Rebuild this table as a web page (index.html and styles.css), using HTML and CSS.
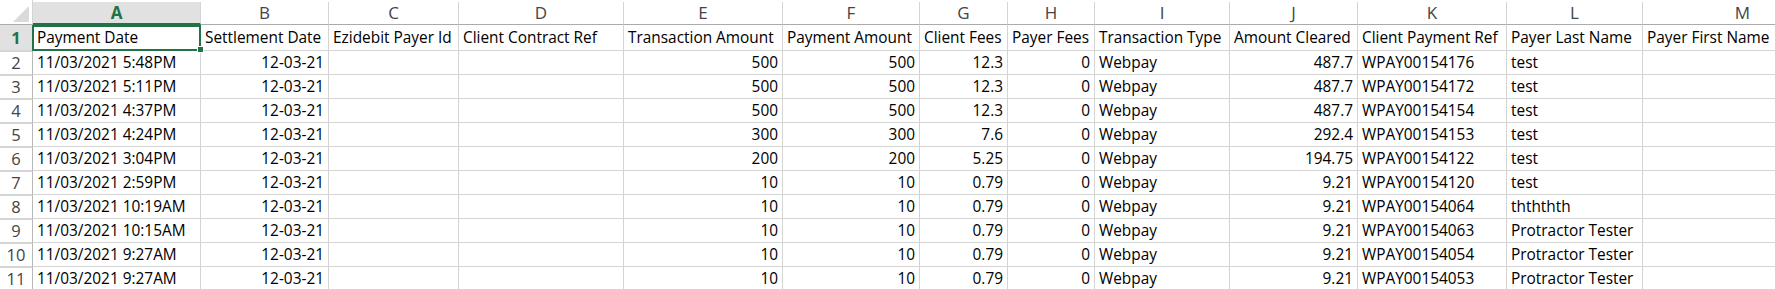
FILE: index.html
```html
<!DOCTYPE html>
<html>
<head>
<meta charset="utf-8">
<link rel="stylesheet" href="styles.css">
</head>
<body>
<div class="sheet">
  <div class="row colhead">
    <div class="corner"><svg width="16" height="16" viewBox="0 0 16 16"><polygon points="16,0 16,16 0,16" fill="#dadada"/></svg></div>
    <div class="ch sel">A</div><div class="ch">B</div><div class="ch">C</div><div class="ch">D</div><div class="ch">E</div><div class="ch">F</div><div class="ch">G</div><div class="ch">H</div><div class="ch">I</div><div class="ch">J</div><div class="ch">K</div><div class="ch">L</div><div class="ch">M</div><div class="ch"></div>
  </div>
  <div class="row first">
    <div class="rh sel">1</div>
    <div class="c active">Payment Date</div><div class="c">Settlement Date</div><div class="c">Ezidebit Payer Id</div><div class="c">Client Contract Ref</div><div class="c">Transaction Amount</div><div class="c">Payment Amount</div><div class="c">Client Fees</div><div class="c">Payer Fees</div><div class="c">Transaction Type</div><div class="c">Amount Cleared</div><div class="c">Client Payment Ref</div><div class="c">Payer Last Name</div><div class="c">Payer First Name</div><div class="c"></div>
  </div>
  <div class="row">
    <div class="rh">2</div>
    <div class="c">11/03/2021 5:48PM</div><div class="c n">12-03-21</div><div class="c"></div><div class="c"></div><div class="c n">500</div><div class="c n">500</div><div class="c n">12.3</div><div class="c n">0</div><div class="c">Webpay</div><div class="c n">487.7</div><div class="c">WPAY00154176</div><div class="c">test</div><div class="c"></div><div class="c"></div>
  </div>
  <div class="row">
    <div class="rh">3</div>
    <div class="c">11/03/2021 5:11PM</div><div class="c n">12-03-21</div><div class="c"></div><div class="c"></div><div class="c n">500</div><div class="c n">500</div><div class="c n">12.3</div><div class="c n">0</div><div class="c">Webpay</div><div class="c n">487.7</div><div class="c">WPAY00154172</div><div class="c">test</div><div class="c"></div><div class="c"></div>
  </div>
  <div class="row">
    <div class="rh">4</div>
    <div class="c">11/03/2021 4:37PM</div><div class="c n">12-03-21</div><div class="c"></div><div class="c"></div><div class="c n">500</div><div class="c n">500</div><div class="c n">12.3</div><div class="c n">0</div><div class="c">Webpay</div><div class="c n">487.7</div><div class="c">WPAY00154154</div><div class="c">test</div><div class="c"></div><div class="c"></div>
  </div>
  <div class="row">
    <div class="rh">5</div>
    <div class="c">11/03/2021 4:24PM</div><div class="c n">12-03-21</div><div class="c"></div><div class="c"></div><div class="c n">300</div><div class="c n">300</div><div class="c n">7.6</div><div class="c n">0</div><div class="c">Webpay</div><div class="c n">292.4</div><div class="c">WPAY00154153</div><div class="c">test</div><div class="c"></div><div class="c"></div>
  </div>
  <div class="row">
    <div class="rh">6</div>
    <div class="c">11/03/2021 3:04PM</div><div class="c n">12-03-21</div><div class="c"></div><div class="c"></div><div class="c n">200</div><div class="c n">200</div><div class="c n">5.25</div><div class="c n">0</div><div class="c">Webpay</div><div class="c n">194.75</div><div class="c">WPAY00154122</div><div class="c">test</div><div class="c"></div><div class="c"></div>
  </div>
  <div class="row">
    <div class="rh">7</div>
    <div class="c">11/03/2021 2:59PM</div><div class="c n">12-03-21</div><div class="c"></div><div class="c"></div><div class="c n">10</div><div class="c n">10</div><div class="c n">0.79</div><div class="c n">0</div><div class="c">Webpay</div><div class="c n">9.21</div><div class="c">WPAY00154120</div><div class="c">test</div><div class="c"></div><div class="c"></div>
  </div>
  <div class="row">
    <div class="rh">8</div>
    <div class="c">11/03/2021 10:19AM</div><div class="c n">12-03-21</div><div class="c"></div><div class="c"></div><div class="c n">10</div><div class="c n">10</div><div class="c n">0.79</div><div class="c n">0</div><div class="c">Webpay</div><div class="c n">9.21</div><div class="c">WPAY00154064</div><div class="c">thththth</div><div class="c"></div><div class="c"></div>
  </div>
  <div class="row">
    <div class="rh">9</div>
    <div class="c">11/03/2021 10:15AM</div><div class="c n">12-03-21</div><div class="c"></div><div class="c"></div><div class="c n">10</div><div class="c n">10</div><div class="c n">0.79</div><div class="c n">0</div><div class="c">Webpay</div><div class="c n">9.21</div><div class="c">WPAY00154063</div><div class="c">Protractor Tester</div><div class="c"></div><div class="c"></div>
  </div>
  <div class="row">
    <div class="rh">10</div>
    <div class="c">11/03/2021 9:27AM</div><div class="c n">12-03-21</div><div class="c"></div><div class="c"></div><div class="c n">10</div><div class="c n">10</div><div class="c n">0.79</div><div class="c n">0</div><div class="c">Webpay</div><div class="c n">9.21</div><div class="c">WPAY00154054</div><div class="c">Protractor Tester</div><div class="c"></div><div class="c"></div>
  </div>
  <div class="row">
    <div class="rh">11</div>
    <div class="c">11/03/2021 9:27AM</div><div class="c n">12-03-21</div><div class="c"></div><div class="c"></div><div class="c n">10</div><div class="c n">10</div><div class="c n">0.79</div><div class="c n">0</div><div class="c">Webpay</div><div class="c n">9.21</div><div class="c">WPAY00154053</div><div class="c">Protractor Tester</div><div class="c"></div><div class="c"></div>
  </div>
</div>
</body>
</html>
```
FILE: styles.css
```css
html, body {
  margin: 0;
  padding: 0;
  background: #ffffff;
  overflow: hidden;
}
.sheet {
  font-family: "Open Sans", "Liberation Sans", sans-serif;
  font-size: 15.4px;
  color: #000000;
  width: 1775px;
}
.row {
  display: grid;
  grid-template-columns: 33px 168px 128px 130px 165px 159px 137px 88px 87px 135px 128px 149px 136px 200px;
  height: 24px;
}
.row.first {
  height: 26px;
}
.row.colhead {
  height: 25px;
}
.c, .rh, .ch, .corner {
  box-sizing: border-box;
  white-space: nowrap;
}
.c {
  overflow: hidden;
  border-right: 1px solid #d4d4d4;
  border-bottom: 1px solid #d4d4d4;
  line-height: 23px;
  padding: 0 3px 0 4px;
}
.first .c {
  line-height: 25px;
}
.c.n {
  text-align: right;
  padding-right: 4px;
}
.rh {
  border-right: 1px solid #b8b8b8;
  border-bottom: 1px solid #d4d4d4;
  text-align: center;
  line-height: 23px;
  color: #444444;
  font-size: 16.5px;
}
.first .rh {
  line-height: 25px;
}
.rh.sel {
  background: #e1e1e1;
  color: #217346;
  font-weight: 700;
}
.corner {
  border-bottom: 1px solid #ababab;
  border-right: 1px solid #d4d4d4;
  display: flex;
  justify-content: flex-end;
  align-items: flex-end;
  padding: 0 3px 2px 0;
}
.corner svg {
  display: block;
}
.ch {
  margin-top: 2px;
  border-right: 1px solid #d4d4d4;
  border-bottom: 1px solid #ababab;
  text-align: center;
  line-height: 22px;
  color: #444444;
  font-size: 17px;
}
.ch.sel {
  background: #e1e1e1;
  color: #217346;
  font-weight: 700;
  border-bottom: 2px solid #217346;
  line-height: 21px;
}
.c.active {
  position: relative;
  overflow: visible;
}
.c.active::before {
  content: "";
  position: absolute;
  left: -1px;
  top: 0;
  right: -1px;
  bottom: -1px;
  border: 2px solid #217346;
  pointer-events: none;
}
.c.active::after {
  content: "";
  position: absolute;
  right: -4px;
  bottom: -3px;
  width: 5px;
  height: 5px;
  background: #217346;
  border: 1px solid #ffffff;
  z-index: 2;
}
```
